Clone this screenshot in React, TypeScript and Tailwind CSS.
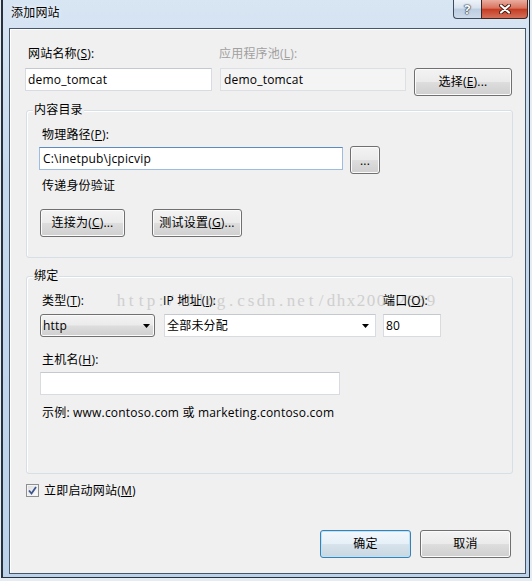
import type { ReactNode } from "react";

const btnFace =
  "bg-[linear-gradient(180deg,#f3f3f3_0%,#ebebeb_48%,#dddddd_52%,#cfcfcf_100%)] shadow-[inset_0_0_0_1px_#fbfbfb]";

function Button({ children, className = "", primary = false }: { children: ReactNode; className?: string; primary?: boolean }) {
  return (
    <div
      className={`flex h-[28px] shrink-0 items-center justify-center rounded-[3px] border ${
        primary ? "border-[#3c7fb1] bg-[linear-gradient(180deg,#f2f8fc_0%,#e6f0f7_48%,#d6e3ec_52%,#c9d7e2_100%)] shadow-[inset_0_0_0_1px_#b8e3f8]" : `border-[#707070] ${btnFace}`
      } ${className}`}
    >
      {children}
    </div>
  );
}

function Arrow() {
  return (
    <svg width="7" height="4" viewBox="0 0 7 4" className="shrink-0">
      <path d="M0 0h7L3.5 4z" fill="#000" />
    </svg>
  );
}

function GroupBox({ title, className = "", children }: { title: string; className?: string; children: ReactNode }) {
  return (
    <div className={`relative ml-px w-[487px] rounded-[3px] border border-[#d5dfe5] pl-[12px] shadow-[inset_1px_1px_0_#ffffff] ${className}`}>
      <span className="absolute -top-[9px] left-[6px] bg-[#f0f0f0] px-[1px] leading-4">{title}</span>
      {children}
    </div>
  );
}

const watermark = "http://blog.csdn.net/dhx20022889";

export default function App() {
  return (
    <div className="h-[581px] w-[532px] overflow-hidden bg-[#e6ecf2] font-['Open_Sans','Noto_Sans_CJK_SC',sans-serif] text-[12px] tracking-[0.2px] text-black">
      <div className="relative ml-px flex h-[578px] w-[529px] flex-col border-b border-l-2 border-r border-[#27323f] bg-[linear-gradient(180deg,#d8e5f3_0%,#c5d9ee_30%,#bcd2ea_100%)]">
        {/* title bar */}
        <div className="flex h-[28px] shrink-0 items-center pl-[8px] pb-[2px]">
          <span className="leading-4 [text-shadow:0_0_5px_#ffffff]">添加网站</span>
        </div>
        <div className="absolute right-px top-0 flex">
          <div className="flex h-[19px] w-[28px] items-center justify-center rounded-bl-[4px] border-b border-l border-[#3d4b5c] bg-[linear-gradient(180deg,#eef3f9_0%,#d7e2ee_45%,#bccde1_50%,#cddbea_100%)]">
            <span className="text-[13px] font-bold leading-none text-white [text-shadow:0_0_1px_#253040,0_0_1px_#253040,0_0_2px_#253040]">?</span>
          </div>
          <div className="flex h-[19px] w-[47px] items-center justify-center rounded-br-[4px] border-x border-b border-[#3f2620] bg-[linear-gradient(180deg,#e9ada0_0%,#d9735e_45%,#c53d22_52%,#d4705a_100%)]">
            <svg width="12" height="10" viewBox="0 0 12 10">
              <path d="M2 1.5L10 8.5M10 1.5L2 8.5" stroke="#4a1a12" strokeWidth="4" strokeLinecap="round" />
              <path d="M2 1.5L10 8.5M10 1.5L2 8.5" stroke="#ffffff" strokeWidth="2.2" strokeLinecap="round" />
            </svg>
          </div>
        </div>

        {/* client area */}
        <div className="ml-[6px] mr-[3px] h-[546px] border border-[#46566a] bg-[#f0f0f0] pl-[15px] pr-[12px] pt-[17px] shadow-[inset_1px_1px_0_#ffffff]">
          <div className="flex h-4 leading-4">
            <span className="w-[195px] pl-[3px]">
              网站名称(<u>S</u>):
            </span>
            <span className="-ml-px text-[#a0a0a0]">
              应用程序池(<u>L</u>):
            </span>
          </div>
          <div className="mt-[6px] flex items-start">
            <div className="flex h-[23px] w-[187px] items-center border border-[#d8dce1] border-t-[#c4c9cf] bg-white pl-[2px]">demo_tomcat</div>
            <div className="ml-[8px] flex h-[23px] w-[186px] items-center border border-[#dcdfe3] bg-[#f4f4f4] pl-[3px]">demo_tomcat</div>
            <Button className="ml-[8px] w-[98px]">
              选择(<u>E</u>)...
            </Button>
          </div>

          <GroupBox title="内容目录" className="mt-[14px] h-[148px] pt-[16px]">
            <div className="pl-[3px] leading-4">
              物理路径(<u>P</u>):
            </div>
            <div className="mt-[3px] flex items-start">
              <div className="mt-px flex h-[23px] w-[304px] items-center border border-[#9cbde0] border-t-[#5b8bbf] bg-white pl-[3px]">C:\inetpub\jcpicvip</div>
              <Button className="ml-[7px] w-[30px]">
                <span className="mt-[2px] leading-none">...</span>
              </Button>
            </div>
            <div className="mt-[4px] pl-[3px] leading-4">传递身份验证</div>
            <div className="mt-[15px] flex pl-px">
              <Button className="w-[85px]">
                连接为(<u>C</u>)...
              </Button>
              <Button className="ml-[27px] w-[90px]">
                测试设置(<u>G</u>)...
              </Button>
            </div>
          </GroupBox>

          <GroupBox title="绑定" className="mt-[18px] h-[198px] pt-[16px]">
            <div className="pointer-events-none absolute left-[89px] top-[14px] flex font-['Liberation_Serif',serif] text-[17px] leading-[20px] tracking-normal text-[#cfcfcf]">
              {watermark.split("").map((c, i) => (
                <span key={i} className="inline-block w-[10px] text-center">
                  {c}
                </span>
              ))}
            </div>
            <div className="relative flex h-4 leading-4">
              <span className="w-[124px] pl-[3px]">
                类型(<u>T</u>):
              </span>
              <span className="w-[220px]">
                IP 地址(<u>I</u>):
              </span>
              <span>
                端口(<u>O</u>):
              </span>
            </div>
            <div className="mt-[5px] flex pl-px">
              <div className={`flex h-[23px] w-[115px] items-center justify-between rounded-[3px] border border-[#707070] pl-[2px] pr-[4px] ${btnFace}`}>
                <span>http</span>
                <Arrow />
              </div>
              <div className="ml-[9px] flex h-[23px] w-[212px] items-center justify-between border border-[#d8dce1] border-t-[#c4c9cf] bg-white pl-[2px] pr-[6px]">
                <span>全部未分配</span>
                <Arrow />
              </div>
              <div className="ml-[7px] flex h-[23px] w-[58px] items-center border border-[#d8dce1] border-t-[#c4c9cf] bg-white pl-[2px]">80</div>
            </div>
            <div className="mt-[15px] pl-[3px] leading-4">
              主机名(<u>H</u>):
            </div>
            <div className="ml-px mt-[4px] h-[23px] w-[300px] border border-[#d8dce1] border-t-[#c4c9cf] bg-white" />
            <div className="mt-[10px] pl-[3px] leading-4">示例: www.contoso.com 或 marketing.contoso.com</div>
          </GroupBox>

          <div className="mt-[10px] flex h-[13px] items-center pl-px">
            <div className="flex h-[13px] w-[13px] items-center justify-center border border-[#8e8f8f] bg-[linear-gradient(135deg,#dcdcdc_0%,#ffffff_100%)] shadow-[inset_0_0_0_1px_#f4f4f4]">
              <svg width="9" height="9" viewBox="0 0 9 9">
                <path d="M1 4.5L3.5 7.5L8 1" stroke="#3d5690" strokeWidth="1.8" fill="none" />
              </svg>
            </div>
            <span className="ml-[5px] leading-4">
              立即启动网站(<u>M</u>)
            </span>
          </div>

          <div className="mt-[33px] flex justify-end pr-[2px]">
            <Button primary className="w-[91px]">
              确定
            </Button>
            <Button className="ml-[9px] w-[91px]">取消</Button>
          </div>
        </div>
      </div>
    </div>
  );
}
